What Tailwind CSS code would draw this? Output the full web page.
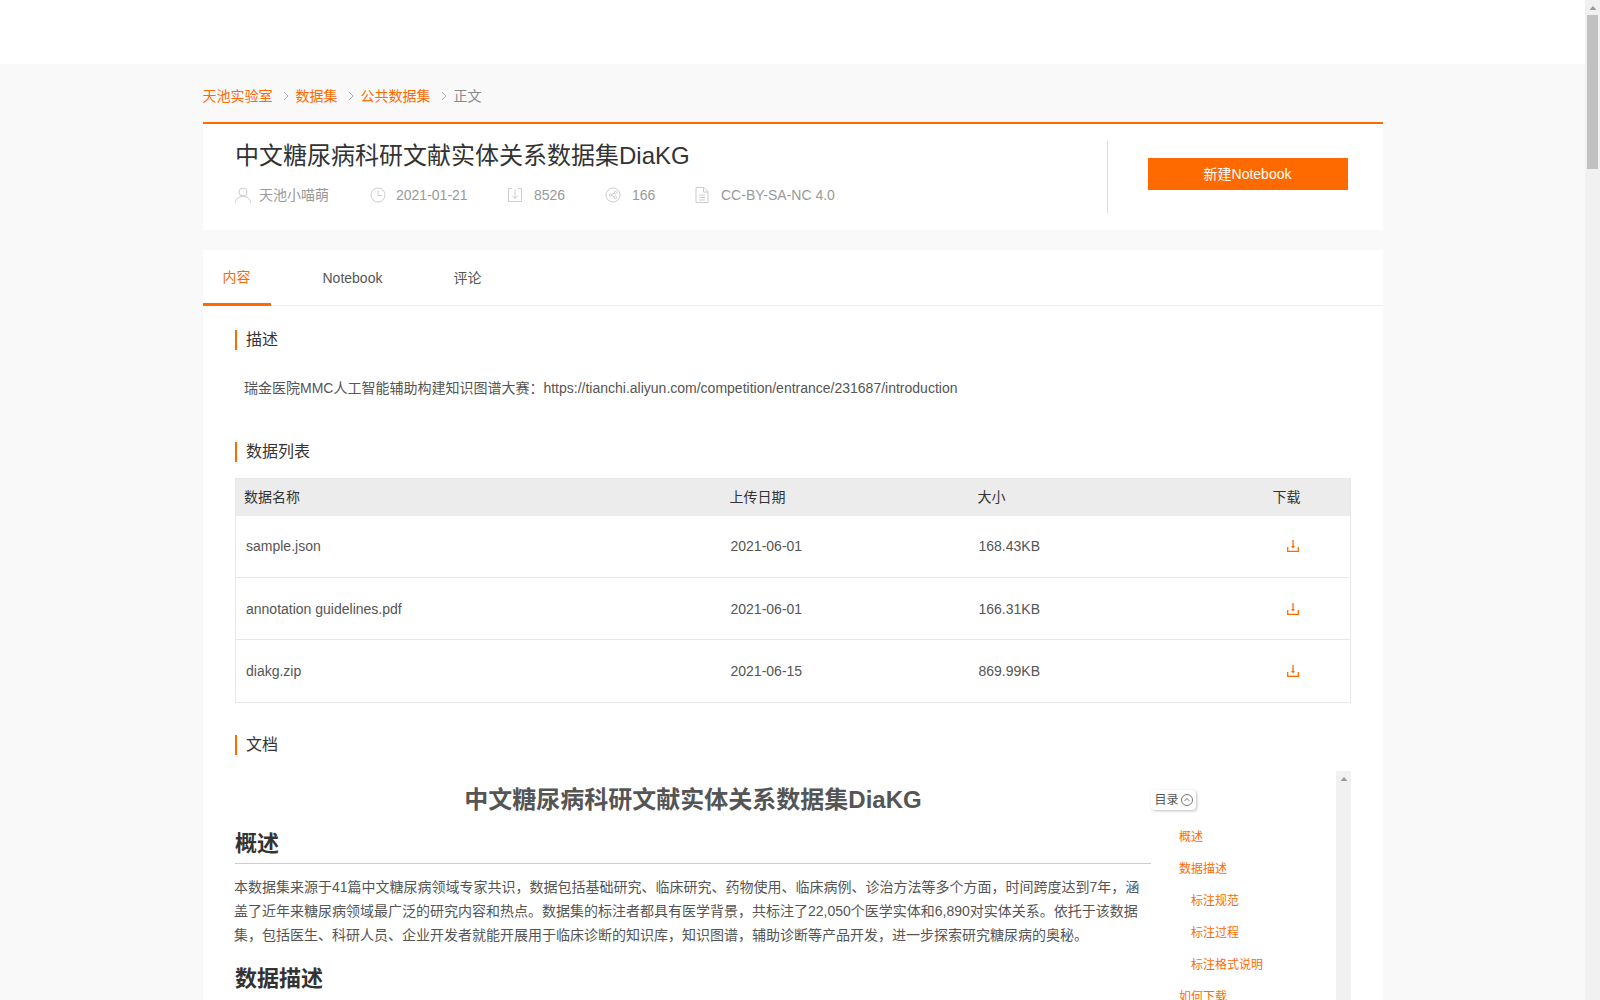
<!DOCTYPE html>
<html lang="zh">
<head>
<meta charset="utf-8">
<title>中文糖尿病科研文献实体关系数据集DiaKG</title>
<script src="https://cdn.jsdelivr.net/npm/@tailwindcss/browser@4"></script>
</head>
<body class="h-[1000px] overflow-hidden bg-[#f9f9f9] font-['Liberation_Sans','Noto_Sans_CJK_SC',sans-serif] text-sm text-[#555]">
<div class="relative h-[1000px] w-[1600px] overflow-hidden">
  <div class="h-16 w-full bg-white"></div>
  <main class="ml-[202.5px] w-[1180px]">
    <nav class="flex h-[58px] items-center pt-[6px] text-sm">
      <a class="text-[#ff6a00]">天池实验室</a>
      <svg class="mr-[6px] ml-[9px] h-2.5 w-2 text-[#aaa]" viewBox="0 0 8 10" fill="none" stroke="currentColor"><path d="M2 1l4 4-4 4"/></svg>
      <a class="text-[#ff6a00]">数据集</a>
      <svg class="mr-[6px] ml-[9px] h-2.5 w-2 text-[#aaa]" viewBox="0 0 8 10" fill="none" stroke="currentColor"><path d="M2 1l4 4-4 4"/></svg>
      <a class="text-[#ff6a00]">公共数据集</a>
      <svg class="mr-[6px] ml-[9px] h-2.5 w-2 text-[#aaa]" viewBox="0 0 8 10" fill="none" stroke="currentColor"><path d="M2 1l4 4-4 4"/></svg>
      <span class="text-[#888]">正文</span>
    </nav>
    <section class="flex h-[108px] border-t-2 border-[#ff6a00] bg-white">
      <div class="flex-1 pt-[14px] pl-[32.5px]">
        <h1 class="text-2xl leading-9 font-normal text-[#333]">中文糖尿病科研文献实体关系数据集DiaKG</h1>
        <div class="mt-[9px] flex h-6 items-center text-sm text-[#999]">
          <svg class="mr-2 h-4 w-4 text-[#ccc]" viewBox="0 0 16 16" fill="none" stroke="currentColor"><circle cx="8" cy="5" r="4"/><path d="M.5 16c0-4 3-6.500 7.500-6.500s7.500 2.500 7.500 6.500"/></svg>
          <span class="w-[111px]">天池小喵萌</span>
          <svg class="mr-2.5 h-4 w-4 text-[#ccc]" viewBox="0 0 16 16" fill="none" stroke="currentColor"><circle cx="8" cy="8" r="7"/><path d="M8 3.500V8.500h4"/></svg>
          <span class="w-[111px]">2021-01-21</span>
          <svg class="mr-[11px] h-4 w-4 text-[#ccc]" viewBox="0 0 16 16" fill="none" stroke="currentColor"><path d="M5 1.500H1.500v13h13v-13H11M8 2.500v9M5 8.500l3 3 3-3"/></svg>
          <span class="w-[71px]">8526</span>
          <svg class="mr-[11px] h-4 w-4 text-[#ccc]" viewBox="0 0 16 16" fill="none" stroke="currentColor"><circle cx="8" cy="8" r="7"/><circle cx="5.500" cy="8" r="1.200"/><circle cx="10.500" cy="5.500" r="1.200"/><circle cx="10.500" cy="10.500" r="1.200"/><path d="M6.500 7.500l3-1.500M6.500 8.500l3 1.500"/></svg>
          <span class="w-[62px]">166</span>
          <svg class="mr-[11px] h-4 w-4 text-[#ccc]" viewBox="0 0 16 16" fill="none" stroke="currentColor"><path d="M2 .5h8l4 4v11H2zM9.500.5v4.500H14M5 8h6M5 10.500h6M5 13h6"/></svg>
          <span>CC-BY-SA-NC 4.0</span>
        </div>
      </div>
      <div class="my-[17px] flex w-[276px] items-start border-l border-[#ddd] pt-[17px] pl-[40px]">
        <button class="h-8 w-[200px] bg-[#ff6a00] text-sm text-white">新建Notebook</button>
      </div>
    </section>
    <section class="mt-5 bg-white">
      <div class="flex h-14 border-b border-[#eee]">
        <div class="relative flex h-14 w-[68px] shrink-0 items-center justify-center border-b-[3px] border-[#ff6a00] text-[#ff6a00]">内容</div>
        <div class="ml-[52px] flex h-14 items-center">Notebook</div>
        <div class="ml-[71px] flex h-14 items-center">评论</div>
      </div>
      <div class="px-[32.5px]">
        <h2 class="mt-6 h-5 border-l-2 border-[#ff6a00] pl-[9px] text-base leading-5 font-normal text-[#333]">描述</h2>
        <p class="mt-[28px] pl-[9px] leading-5">瑞金医院MMC人工智能辅助构建知识图谱大赛：https://tianchi.aliyun.com/competition/entrance/231687/introduction</p>
        <h2 class="mt-[44px] h-5 border-l-2 border-[#ff6a00] pl-[9px] text-base leading-5 font-normal text-[#333]">数据列表</h2>
        <table class="mt-4 w-[1116px] table-fixed border border-[#e8e8e8] text-left">
          <thead class="bg-[#ececec] text-[#333]">
            <tr class="h-[37px]">
              <th class="w-[494px] pl-2 font-normal">数据名称</th>
              <th class="w-[248px] font-normal">上传日期</th>
              <th class="w-[295px] font-normal">大小</th>
              <th class="font-normal">下载</th>
            </tr>
          </thead>
          <tbody>
            <tr class="h-[62px] border-b border-[#e8e8e8]">
              <td class="pl-2.5">sample.json</td><td class="pl-px">2021-06-01</td><td class="pl-px">168.43KB</td>
              <td><svg class="ml-[14px] h-3 w-3 text-[#ff6a00]" viewBox="0 0 12 12" fill="none" stroke="currentColor" stroke-width="1.300"><path d="M6 0v6.500M.7 7v4.300h10.600V7"/><path d="M4 6h4L6 8.500z" fill="currentColor" stroke="none"/></svg></td>
            </tr>
            <tr class="h-[62px] border-b border-[#e8e8e8]">
              <td class="pl-2.5">annotation guidelines.pdf</td><td class="pl-px">2021-06-01</td><td class="pl-px">166.31KB</td>
              <td><svg class="ml-[14px] h-3 w-3 text-[#ff6a00]" viewBox="0 0 12 12" fill="none" stroke="currentColor" stroke-width="1.300"><path d="M6 0v6.500M.7 7v4.300h10.600V7"/><path d="M4 6h4L6 8.500z" fill="currentColor" stroke="none"/></svg></td>
            </tr>
            <tr class="h-[63px]">
              <td class="pl-2.5">diakg.zip</td><td class="pl-px">2021-06-15</td><td class="pl-px">869.99KB</td>
              <td><svg class="ml-[14px] h-3 w-3 text-[#ff6a00]" viewBox="0 0 12 12" fill="none" stroke="currentColor" stroke-width="1.300"><path d="M6 0v6.500M.7 7v4.300h10.600V7"/><path d="M4 6h4L6 8.500z" fill="currentColor" stroke="none"/></svg></td>
            </tr>
          </tbody>
        </table>
        <h2 class="mt-8 h-5 border-l-2 border-[#ff6a00] pl-[9px] text-base leading-5 font-normal text-[#333]">文档</h2>
        <div class="relative mt-4 flex h-[400px] w-[1116px]">
          <article class="w-[916px] shrink-0">
            <h1 class="mt-[13px] text-center text-2xl leading-8 font-bold text-[#555]">中文糖尿病科研文献实体关系数据集DiaKG</h1>
            <h2 class="mt-[12px] h-[36px] border-b border-[#ccc] text-[22px] leading-8 font-bold text-[#333]">概述</h2>
            <p class="mt-[11px] -ml-px text-sm leading-6 text-[#555]">本数据集来源于41篇中文糖尿病领域专家共识，数据包括基础研究、临床研究、药物使用、临床病例、诊治方法等多个方面，时间跨度达到7年，涵盖了近年来糖尿病领域最广泛的研究内容和热点。数据集的标注者都具有医学背景，共标注了22,050个医学实体和6,890对实体关系。依托于该数据集，包括医生、科研人员、企业开发者就能开展用于临床诊断的知识库，知识图谱，辅助诊断等产品开发，进一步探索研究糖尿病的奥秘。</p>
            <h2 class="mt-[16px] text-[22px] leading-8 font-bold text-[#333]">数据描述</h2>
          </article>
          <aside class="w-[185px] shrink-0 text-xs">
            <div class="mt-[19px] flex h-5 w-[45px] items-center justify-center gap-0.5 rounded-sm bg-white text-[#555] shadow-[1px_1px_3px_rgba(0,0,0,0.25)]">目录<svg class="h-3 w-3 shrink-0 text-[#777]" viewBox="0 0 12 12" fill="none" stroke="currentColor"><circle cx="6" cy="6" r="5.500"/><path d="M3.500 7L6 4.500 8.500 7"/></svg></div>
            <ul class="mt-[18px] flex flex-col gap-[14px] pl-7 leading-[18px] text-[#ff6a00]">
              <li>概述</li>
              <li>数据描述</li>
              <li class="pl-3">标注规范</li>
              <li class="pl-3">标注过程</li>
              <li class="pl-3">标注格式说明</li>
              <li>如何下载</li>
            </ul>
          </aside>
          <div class="flex w-[15px] shrink-0 justify-center bg-[#f1f1f1] pt-1.5"><svg class="h-1 w-2 text-[#999]" viewBox="0 0 8 4" fill="currentColor"><path d="M4 0l3.500 4H.5z"/></svg></div>
        </div>
      </div>
    </section>
  </main>
  <div class="absolute top-0 right-0 h-full w-[15px] bg-[#f1f1f1]">
    <svg class="mx-auto mt-1.5 h-1 w-2 text-[#999]" viewBox="0 0 8 4" fill="currentColor"><path d="M4 0l3.500 4H.5z"/></svg>
    <div class="absolute top-[15px] left-0.5 h-[154px] w-[11px] bg-[#c1c1c1]"></div>
  </div>
</div>
</body>
</html>
